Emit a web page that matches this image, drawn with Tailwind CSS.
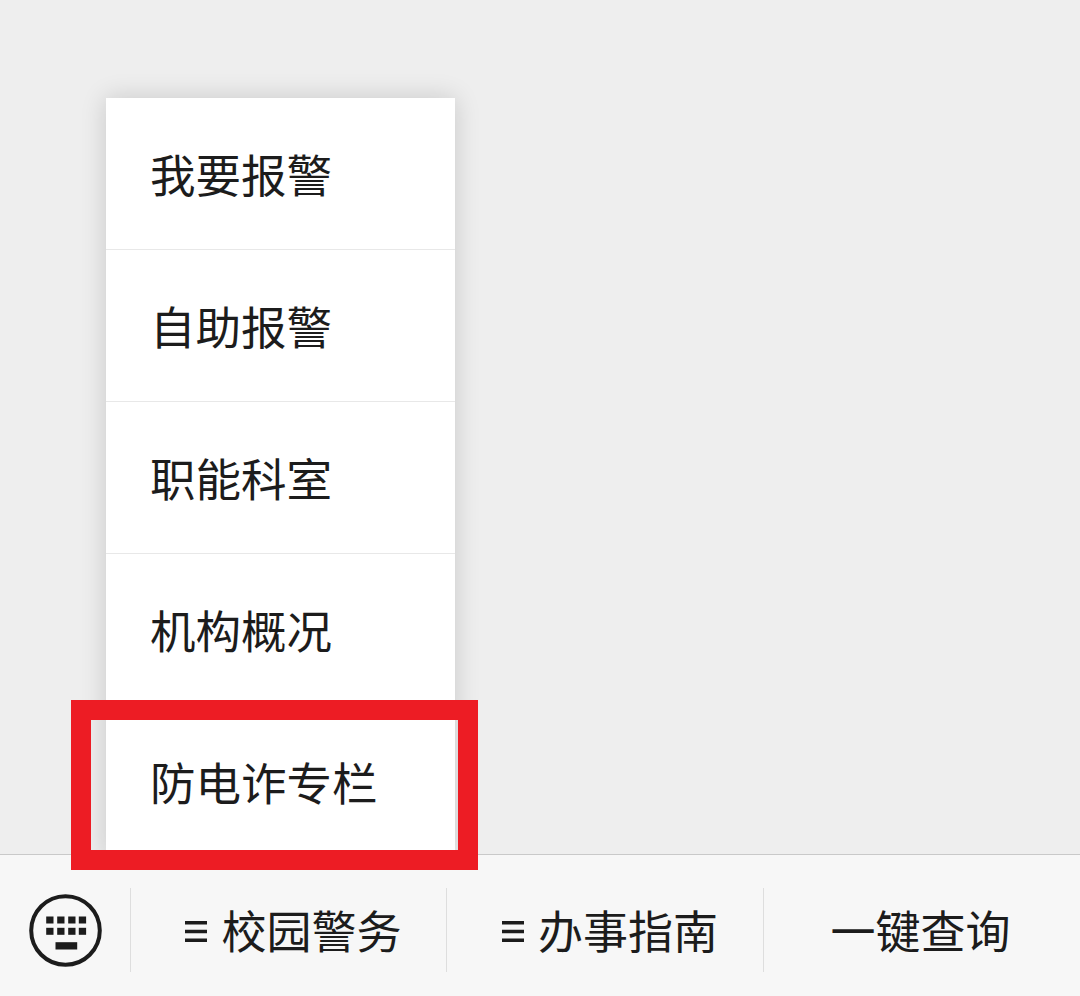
<!DOCTYPE html>
<html lang="zh-CN">
<head>
    <meta charset="UTF-8" />
    <meta name="viewport" content="width=device-width, initial-scale=1.0" />
    <title>校园警务</title>
    <script src="https://cdn.jsdelivr.net/npm/@tailwindcss/browser@4"></script>
</head>
<body class="bg-[#eeeeee] font-['Noto_Sans_CJK_SC','Noto_Sans',sans-serif] text-[#1c1c1c]">
    <div class="relative h-[996px] w-[1080px] overflow-hidden flex flex-col">
        <div class="flex-1"></div>

        <!-- Bottom menu bar -->
        <nav class="relative z-10 flex h-[142px] border-t border-[#c9c9c9] bg-[#f7f7f7] text-[45px] leading-none">
            <div class="flex w-[130px] shrink-0 items-center justify-center pt-[10px]">
                <svg class="h-[73px] w-[73px]" viewBox="0 0 73 73" fill="#1c1c1c">
                    <circle cx="36.5" cy="36.5" r="34.3" fill="none" stroke="#1c1c1c" stroke-width="4" />
                    <rect x="17.2" y="22.5" width="7.3" height="7" /><rect x="28.2" y="22.5" width="7.3" height="7" /><rect x="39.2" y="22.5" width="7.3" height="7" /><rect x="49.8" y="22.5" width="7.3" height="7" />
                    <rect x="17.2" y="33.8" width="7.3" height="7" /><rect x="28.2" y="33.8" width="7.3" height="7" /><rect x="39.2" y="33.8" width="7.3" height="7" /><rect x="49.8" y="33.8" width="7.3" height="7" />
                    <rect x="26.5" y="48.2" width="21.7" height="7.3" />
                </svg>
            </div>
            <div class="mt-[33px] mb-[24px] flex w-[316px] items-center justify-center gap-[14px] border-l border-[#dedede] pb-[1px] pl-[10px]">
                <svg class="mt-[4px] h-[21px] w-[22px]" viewBox="0 0 22 21" fill="#1c1c1c"><rect width="22" height="3.5" /><rect y="8.75" width="22" height="3.5" /><rect y="17.5" width="22" height="3.5" /></svg>
                <span>校园警务</span>
            </div>
            <div class="mt-[33px] mb-[24px] flex w-[317px] items-center justify-center gap-[14px] border-l border-[#dedede] pb-[1px] pl-[10px]">
                <svg class="mt-[4px] h-[21px] w-[22px]" viewBox="0 0 22 21" fill="#1c1c1c"><rect width="22" height="3.5" /><rect y="8.75" width="22" height="3.5" /><rect y="17.5" width="22" height="3.5" /></svg>
                <span>办事指南</span>
            </div>
            <div class="mt-[33px] mb-[24px] flex flex-1 items-center justify-center border-l border-[#dedede] pb-[1px] pr-[3px]">
                <span>一键查询</span>
            </div>
        </nav>

        <!-- Popup submenu -->
        <ul class="absolute left-[106px] top-[98px] w-[349px] divide-y divide-[#e8e8e8] bg-white text-[45.5px] leading-none shadow-[0_0_24px_rgba(0,0,0,0.16)]">
            <li class="flex h-[152px] items-center pl-[44px]">我要报警</li>
            <li class="flex h-[152px] items-center pl-[44px]">自助报警</li>
            <li class="flex h-[152px] items-center pl-[44px]">职能科室</li>
            <li class="flex h-[152px] items-center pl-[44px]">机构概况</li>
            <li class="flex h-[152px] items-center pl-[44px]">防电诈专栏</li>
        </ul>

        <!-- Red annotation frame -->
        <div class="absolute left-[71px] top-[700px] z-20 h-[170px] w-[407px] border-20 border-[#ed1c24]"></div>
    </div>
</body>
</html>
